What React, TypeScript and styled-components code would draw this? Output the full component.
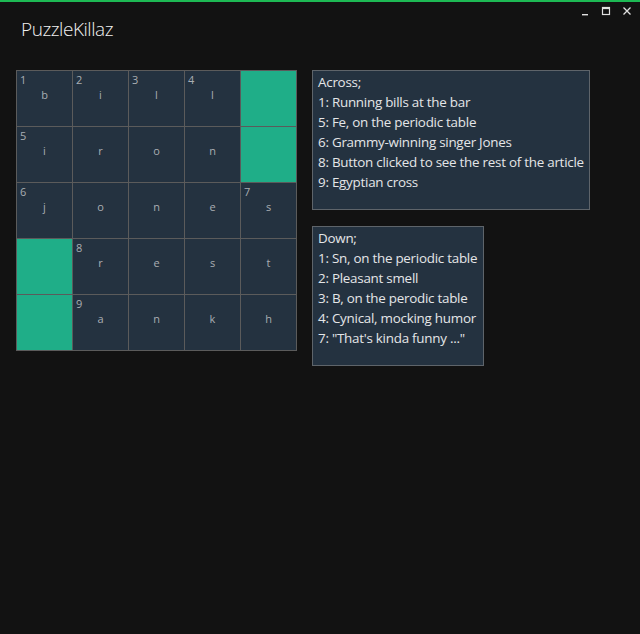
import styled, { createGlobalStyle } from "styled-components";

const GlobalStyle = createGlobalStyle`
  html, body {
    margin: 0;
    padding: 0;
    background: #121212;
  }
  body {
    font-family: "Open Sans", "Noto Sans", sans-serif;
  }
`;

const Window = styled.div`
  width: 640px;
  height: 634px;
  box-sizing: border-box;
  border-top: 2px solid #1db954;
  background: #121212;
  color: #e6e6e6;
  position: relative;
  overflow: hidden;
`;

const Controls = styled.div`
  position: absolute;
  top: 4px;
  right: 8px;
  display: flex;
  gap: 11px;
  align-items: center;
`;

const TitleRow = styled.div`
  padding: 14px 0 0 21px;
  height: 54px;
  box-sizing: border-box;
`;

const Title = styled.h1`
  margin: 0;
  font-size: 19px;
  font-weight: 300;
  line-height: 26px;
  color: #f0f0f0;
  letter-spacing: -0.45px;
`;

const Content = styled.div`
  display: flex;
  gap: 15px;
  padding: 14px 0 0 16px;
  align-items: flex-start;
`;

const Board = styled.div`
  display: grid;
  grid-template-columns: repeat(5, 55px);
  grid-auto-rows: 55px;
  gap: 1px;
  padding: 1px;
  background: #5b5b5b;
`;

const Cell = styled.div<{ $blocked?: boolean }>`
  position: relative;
  background: ${(p) => (p.$blocked ? "#1fae88" : "#243240")};
  display: flex;
  align-items: center;
  justify-content: center;
  padding-bottom: 9px;
  box-sizing: border-box;
  color: #a9aeb3;
  font-size: 11px;
`;

const Num = styled.span`
  position: absolute;
  top: 1px;
  left: 3px;
  font-size: 11px;
  color: #a9aeb3;
`;

const Clues = styled.div`
  display: flex;
  flex-direction: column;
  gap: 16px;
`;

const ClueBox = styled.div<{ $w: number }>`
  width: ${(p) => p.$w}px;
  height: 140px;
  box-sizing: border-box;
  border: 1px solid #5e646a;
  background: #243240;
  padding: 1px 0 0 5px;
`;

const ClueLine = styled.div`
  font-size: 13.4px;
  line-height: 20px;
  letter-spacing: -0.25px;
  color: #e4e6e8;
  white-space: nowrap;
`;

const grid: [string, string][][] = [
  [["1", "b"], ["2", "i"], ["3", "l"], ["4", "l"], ["#", ""]],
  [["5", "i"], ["", "r"], ["", "o"], ["", "n"], ["#", ""]],
  [["6", "j"], ["", "o"], ["", "n"], ["", "e"], ["7", "s"]],
  [["#", ""], ["8", "r"], ["", "e"], ["", "s"], ["", "t"]],
  [["#", ""], ["9", "a"], ["", "n"], ["", "k"], ["", "h"]],
];

const across = [
  "Across;",
  "1: Running bills at the bar",
  "5: Fe, on the periodic table",
  "6: Grammy-winning singer Jones",
  "8: Button clicked to see the rest of the article",
  "9: Egyptian cross",
];

const down = [
  "Down;",
  "1: Sn, on the periodic table",
  "2: Pleasant smell",
  "3: B, on the perodic table",
  "4: Cynical, mocking humor",
  '7: "That\'s kinda funny ..."',
];

const App = () => {
  return (
    <Window>
      <GlobalStyle />
      <Controls>
        <svg width="10" height="10" viewBox="0 0 10 10">
          <rect x="2" y="8" width="6" height="1.4" fill="#e0e0e0" />
        </svg>
        <svg width="10" height="10" viewBox="0 0 10 10">
          <rect x="1.5" y="1.5" width="7" height="7" fill="none" stroke="#e0e0e0" strokeWidth="1.2" />
          <rect x="1.5" y="1.5" width="7" height="1.6" fill="#e0e0e0" />
        </svg>
        <svg width="10" height="10" viewBox="0 0 10 10">
          <path d="M1.5 1.5 L8.5 8.5 M8.5 1.5 L1.5 8.5" stroke="#e0e0e0" strokeWidth="1.3" />
        </svg>
      </Controls>
      <TitleRow>
        <Title>PuzzleKillaz</Title>
      </TitleRow>
      <Content>
        <Board>
          {grid.flat().map(([n, l], i) =>
            n === "#" ? (
              <Cell key={i} $blocked />
            ) : (
              <Cell key={i}>
                {n && <Num>{n}</Num>}
                {l}
              </Cell>
            )
          )}
        </Board>
        <Clues>
          <ClueBox $w={278}>
            {across.map((c) => (
              <ClueLine key={c}>{c}</ClueLine>
            ))}
          </ClueBox>
          <ClueBox $w={172}>
            {down.map((c) => (
              <ClueLine key={c}>{c}</ClueLine>
            ))}
          </ClueBox>
        </Clues>
      </Content>
    </Window>
  );
};

export default App;
